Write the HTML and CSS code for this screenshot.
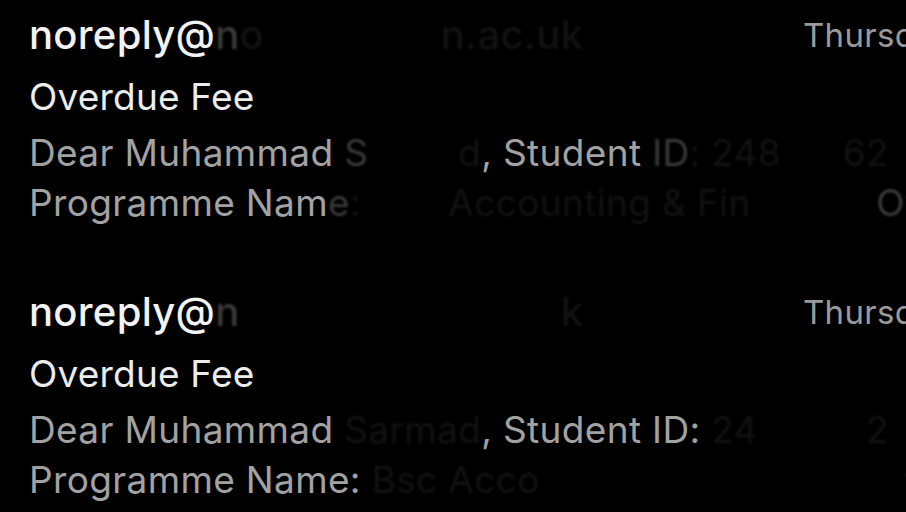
FILE: index.html
```html
<!DOCTYPE html>
<html lang="en">

<head>
    <meta charset="utf-8">
    <meta name="viewport" content="width=device-width, initial-scale=1">
    <title>Inbox</title>
    <link rel="stylesheet" href="styles.css">
</head>

<body>
    <div class="list">
        <div class="mail">
            <div class="head">
                <div class="from">noreply@<span class="soft">n</span><span class="dim">o</span><span class="gone">rthampto</span><span class="dim">n.ac.uk</span></div>
                <div class="date">Thursday</div>
            </div>
            <div class="subject">Overdue Fee</div>
            <div class="preview">
                <div class="line">Dear Muhammad <span class="soft">S</span><span class="gone">arma</span><span class="dim">d</span>, Student <span class="soft">ID</span><span class="dim">: 248</span><span class="gone">1111</span><span class="dim">62</span></div>
                <div class="line">Programme Nam<span class="soft">e</span><span class="dim">:</span><span class="gone"> Bsc </span><span class="dim">Accounting &amp; Fin</span><span class="gone">ance - </span><span class="soft">Ov</span></div>
            </div>
        </div>
        <div class="mail">
            <div class="head">
                <div class="from">noreply@<span class="soft">n</span><span class="gone">orthampton.ac.u</span><span class="dim">k</span></div>
                <div class="date">Thursday</div>
            </div>
            <div class="subject">Overdue Fee</div>
            <div class="preview">
                <div class="line">Dear Muhammad <span class="dim">Sarmad</span>, Student ID: <span class="dim">24</span><span class="gone">811116</span><span class="dim">2</span></div>
                <div class="line">Programme Name: <span class="dim">Bsc Acco</span><span class="gone">unting &amp; Finance - O</span><span class="soft">v</span></div>
            </div>
        </div>
    </div>
</body>

</html>
```

FILE: styles.css
```css
html,
body {
    background: #000;
}

body {
    -webkit-font-smoothing: antialiased;
    font-family: Inter, "Noto Sans", "Liberation Sans", sans-serif;
    margin: 0;
    width: 906px;
    height: 512px;
    overflow: hidden;
    color: #eee;
}

.list {
    display: flex;
    flex-direction: column;
    gap: 60px;
    padding: 11px 0 0 29px;
}

.mail {
    white-space: nowrap;
}

.head {
    display: grid;
    grid-template-columns: 774px auto;
}

.from {
    font-size: 40px;
    font-weight: 500;
    line-height: 48px;
    letter-spacing: 0.3px;
    color: #f2f2f2;
}

.date {
    font-size: 33px;
    line-height: 48px;
    letter-spacing: 0.3px;
    color: #9a9a9a;
}

.subject {
    font-size: 37px;
    line-height: 50px;
    margin-top: 13px;
    letter-spacing: 0.2px;
    color: #ececec;
}

.preview {
    margin-top: 6px;
    font-size: 37px;
    line-height: 50px;
    letter-spacing: 0.35px;
    color: #a2a2a2;
}

/* redacted bits */
.soft {
    color: #3a3a3a;
    filter: blur(0.8px);
}

.dim {
    color: #121212;
    filter: blur(1.2px);
}

.gone {
    color: transparent;
}
```
